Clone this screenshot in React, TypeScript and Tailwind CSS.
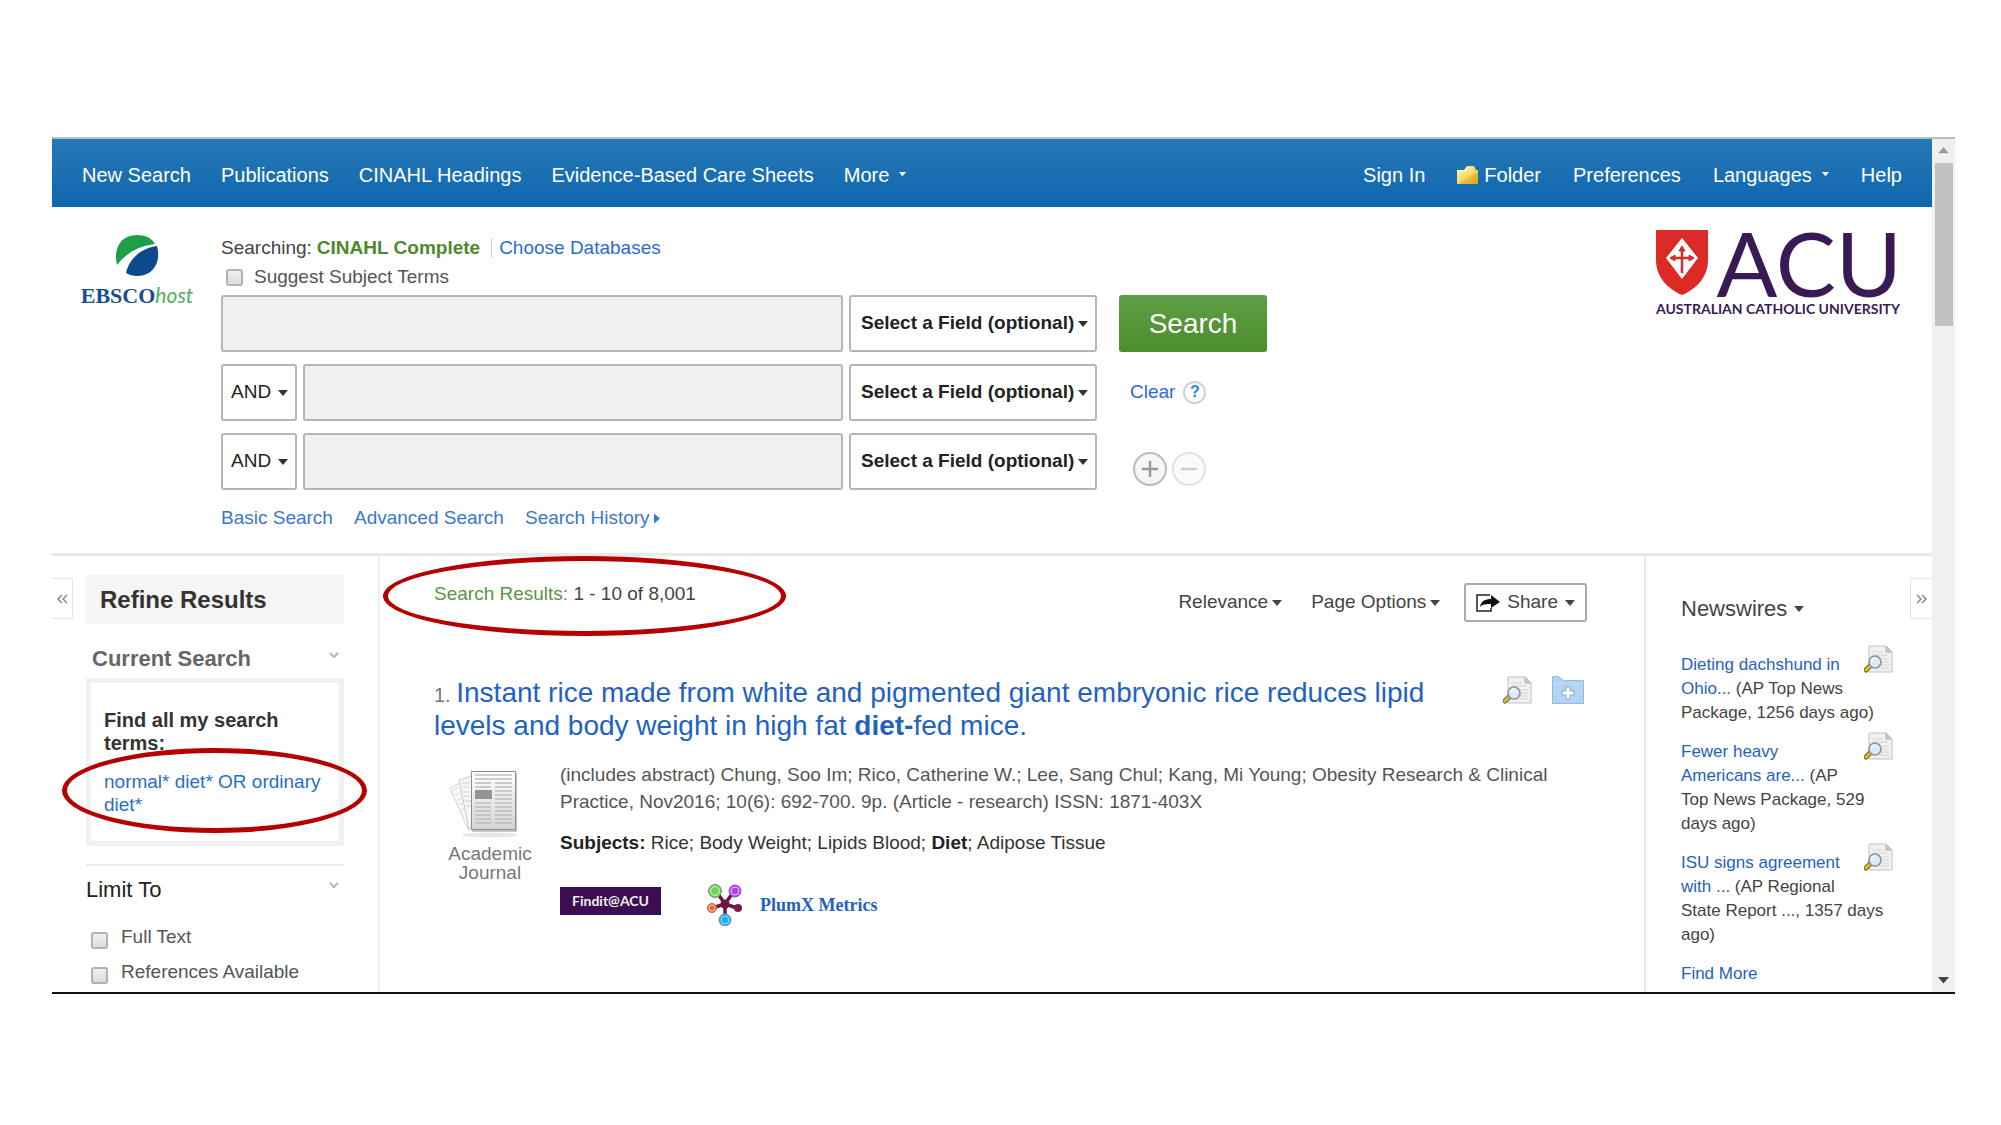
import { Fragment, type ReactNode } from "react";

const Caret = ({ className = "w-[10px]" }: { className?: string }) => (
  <svg viewBox="0 0 10 6" className={`inline-block shrink-0 ${className}`} aria-hidden="true">
    <path d="M0 0h10L5 6z" fill="currentColor" />
  </svg>
);

const FolderIcon = () => (
  <svg viewBox="0 0 22 20" className="h-5 w-[22px]" aria-hidden="true">
    <defs>
      <linearGradient id="folder" x1="0" y1="0" x2="1" y2="1">
        <stop offset="0" stopColor="#fdf6c4" />
        <stop offset="0.5" stopColor="#f6dc6a" />
        <stop offset="1" stopColor="#d9a41c" />
      </linearGradient>
    </defs>
    <path d="M0 5h7l3-4h7l2 4h2v14H0z" fill="url(#folder)" />
    <path d="M0 19L21 8v11z" fill="#d8a820" opacity="0.45" />
    <path d="M1 6h7l3-4" fill="none" stroke="#fffbe0" />
  </svg>
);

const PreviewIcon = () => (
  <svg viewBox="0 0 29 28" className="h-7 w-[29px]" aria-hidden="true">
    <path d="M5 1h17l6 6v20H5z" fill="#f1f1f1" stroke="#c2c2c2" />
    <path d="M22 1v6h6z" fill="#c9c9c9" stroke="#b5b5b5" />
    <path d="M8 7h11M8 10h16M17 14h8M17 17h8M17 20h8M13 23h12" stroke="#d4d4d4" />
    <path d="M2 25l4-4" stroke="#6f6320" strokeWidth="5" strokeLinecap="round" />
    <path d="M2 25l4-4" stroke="#d9bf3c" strokeWidth="3" strokeLinecap="round" />
    <circle cx="11" cy="17" r="6" fill="#dcebf8" stroke="#8c9298" strokeWidth="1.6" />
    <path d="M7.500 16a4 4 0 0 1 4-3" stroke="#fff" strokeWidth="1.600" fill="none" />
  </svg>
);

const AddFolderIcon = () => (
  <svg viewBox="0 0 32 28" className="h-7 w-8" aria-hidden="true">
    <path d="M.5 27.500V.5h6l5 4h20v23z" fill="#b3d3f3" stroke="#94bbe2" />
    <path d="M1 8h30" stroke="#c3dcf5" />
    <path d="M14 11h4v4h4v4h-4v4h-4v-4h-4v-4h4z" fill="#fff" stroke="#7ea9d6" />
  </svg>
);

const ShareIcon = () => (
  <svg viewBox="0 0 24 18" className="h-[18px] w-6" aria-hidden="true">
    <path d="M14 1H1v16h14v-3" fill="none" stroke="#222" strokeWidth="1.500" />
    <path d="M4 13c1-6 5-8 11-8V1l9 7-9 6v-4c-5 0-8 0-11 3z" fill="#111" />
  </svg>
);

const JournalIcon = () => (
  <svg viewBox="0 0 70 68" className="h-[68px] w-[70px]" aria-hidden="true">
    <defs>
      <linearGradient id="paper" x1="0" y1="0" x2="0" y2="1">
        <stop offset="0" stopColor="#fff" />
        <stop offset="1" stopColor="#d3d3d3" />
      </linearGradient>
    </defs>
    <ellipse cx="42" cy="65" rx="28" ry="2.500" fill="#e6e6e6" />
    <path d="M2 18l12-6 10 46-4 1z" fill="#f8f8f8" stroke="#d2d2d2" />
    <path d="M5 20l6-3M7 25l5-2M9 30l5-2M11 35l5-2M13 40l4-1" stroke="#d8d8d8" />
    <path d="M11 10l13-4v54l-3-1z" fill="#f6f6f6" stroke="#cacaca" />
    <path d="M14 13h8M14 17h8M15 22h7M16 26h6M17 31h6M18 36h5" stroke="#d2d2d2" />
    <path d="M24 3h45v59H24z" fill="#c4c4c4" />
    <path d="M23.500 1.500h44v58h-44z" fill="url(#paper)" stroke="#8c8c8c" />
    <path
      d="M27 5h37M27 9h37M27 13h16M47 13h17M27 17h16M47 17h17M47 21h17M47 25h17M47 29h17M27 33h16M47 33h17M27 37h16M47 37h17M27 41h16M47 41h17M27 45h16M47 45h17M27 49h16M47 49h17M27 53h16M47 53h17"
      stroke="#bdbdbd"
      strokeWidth="1.500"
    />
    <path d="M27 20h17v9H27z" fill="#949494" />
  </svg>
);

const PlumIcon = () => (
  <svg viewBox="0 0 36 42" className="h-[42px] w-9" aria-hidden="true">
    <path d="M18 20L9 7M18 20l9-13M18 20L5 24M18 20l12 4M18 20v15" stroke="#6b1846" strokeWidth="3.500" />
    <circle cx="18" cy="20" r="4.500" fill="#6b1846" />
    <circle cx="8" cy="7" r="6.500" fill="#63cf4a" stroke="#8a8a8a" />
    <circle cx="8" cy="7" r="4.500" fill="#6bdb4f" stroke="#d6f5cd" />
    <circle cx="28" cy="7" r="6" fill="#b73df0" stroke="#8a5a9a" />
    <circle cx="28" cy="7" r="4" fill="#b73df0" stroke="#ecc9fb" />
    <circle cx="5" cy="24" r="4.500" fill="#f0622a" stroke="#b06a50" />
    <circle cx="5" cy="24" r="3" fill="#f0622a" stroke="#fbd2c0" />
    <circle cx="31" cy="24" r="4" fill="#7c1c4c" />
    <circle cx="18" cy="36" r="6" fill="#1fb0ea" stroke="#7a8c9a" />
    <circle cx="18" cy="36" r="4" fill="#1fb0ea" stroke="#9adcf5" />
  </svg>
);

const EbscoLogo = () => (
  <div className="flex w-[114px] flex-col items-center pt-[27px]">
    <svg viewBox="0 0 44 43" className="h-[43px] w-11" aria-hidden="true">
      <path d="M2 31C-2 14 6 1 22 1c8 0 15 3 18 9C24 12 11 19 2 31z" fill="#1f9e48" />
      <path d="M42 12c4 14-2 30-20 30-4 0-8-1-11-3C14 25 26 14 42 12z" fill="#0c4a8e" />
    </svg>
    <div className="mt-1 flex items-baseline leading-7">
      <span className="font-['Liberation_Serif',serif] text-[22px] font-bold text-[#1a4f8b]">EBSCO</span>
      <span className="font-[Lato,sans-serif] text-[21px] text-[#52ae62] italic">host</span>
    </div>
  </div>
);

const AcuLogo = () => (
  <div className="flex w-[246px] flex-col pt-[22px] font-[Lato,sans-serif] text-[#3a1a55]">
    <div className="flex h-[66px] items-center justify-between">
      <svg viewBox="0 0 52 65" className="h-[65px] w-[52px]" aria-hidden="true">
        <path d="M0 0h52v30c0 16-10 28-26 35C10 58 0 46 0 30z" fill="#dc2b27" />
        <path d="M26 8l16 20-16 21L10 28z" fill="#fff" />
        <path d="M26 17v26M15 28h22" stroke="#dc2b27" strokeWidth="2.500" />
        <path
          d="M23 21l3-5 3 5zM19 25l-5 3 5 3zM33 25l5 3-5 3z"
          fill="#dc2b27"
          stroke="#dc2b27"
          strokeLinejoin="round"
        />
      </svg>
      <span className="text-[90px] leading-[60px]">ACU</span>
    </div>
    <span className="text-sm leading-7 font-bold whitespace-nowrap">AUSTRALIAN CATHOLIC UNIVERSITY</span>
  </div>
);

const FieldSelect = ({ label, value, bold }: { label: string; value: string; bold?: boolean }) => (
  <div className={`relative shrink-0 ${bold ? "w-[248px]" : "w-[76px]"}`}>
    <select
      aria-label={label}
      className={`h-[57px] w-full appearance-none rounded-[3px] border-2 border-[#b5b5b5] bg-white text-[#222] outline-none ${
        bold ? "pl-[10px] font-bold" : "pl-2"
      }`}
    >
      <option>{value}</option>
    </select>
    <span className="pointer-events-none absolute inset-y-0 right-[9px] flex items-center text-[#333]">
      <Caret />
    </span>
  </div>
);

const SearchInput = ({ label }: { label: string }) => (
  <input
    type="text"
    aria-label={label}
    className="h-[57px] min-w-0 flex-1 rounded-[3px] border-2 border-[#b5b5b5] bg-[#f1f1f1] px-3 outline-none"
  />
);

const Checkbox = ({ id }: { id: string }) => (
  <input
    id={id}
    type="checkbox"
    className="h-[17px] w-[17px] shrink-0 appearance-none rounded-[3px] border-2 border-[#b2b2b2] bg-linear-to-b from-[#efefef] to-[#dedede]"
  />
);

const Chevron = () => (
  <svg viewBox="0 0 10 7" className="h-[7px] w-[10px]" aria-hidden="true">
    <path d="M1 1l4 4 4-4" fill="none" stroke="#b5b5b5" strokeWidth="2" />
  </svg>
);

const Highlight = ({ className }: { className: string }) => (
  <span className={`pointer-events-none absolute rounded-[50%] border-[5px] border-[#b50000] ${className}`} />
);

const leftNav = ["New Search", "Publications", "CINAHL Headings", "Evidence-Based Care Sheets"];

const news: { link: string[]; source: string[] }[] = [
  { link: ["Dieting dachshund in", "Ohio..."], source: ["(AP Top News", "Package, 1256 days ago)"] },
  { link: ["Fewer heavy", "Americans are..."], source: ["(AP", "Top News Package, 529", "days ago)"] },
  { link: ["ISU signs agreement", "with ..."], source: ["(AP Regional", "State Report ..., 1357 days", "ago)"] },
];

const Lines = ({ items }: { items: string[] }) => (
  <>
    {items.map((item, i) => (
      <Fragment key={item}>
        {i > 0 && <br />}
        {item}
      </Fragment>
    ))}
  </>
);

const NavLink = ({ children }: { children: ReactNode }) => (
  <a href="#" className="flex items-center gap-[5px] whitespace-nowrap">
    {children}
  </a>
);

const TopNav = () => (
  <nav className="flex h-[68px] items-center justify-between bg-linear-to-b from-[#2678b6] to-[#0c67ae] px-[30px] pt-[3px] text-xl text-white">
    <div className="flex gap-[30px]">
      {leftNav.map((item) => (
        <NavLink key={item}>{item}</NavLink>
      ))}
      <button type="button" className="flex items-center gap-[10px]">
        More <Caret className="w-[7px]" />
      </button>
    </div>
    <div className="flex gap-8">
      <NavLink>Sign In</NavLink>
      <NavLink>
        <FolderIcon /> Folder
      </NavLink>
      <NavLink>Preferences</NavLink>
      <button type="button" className="flex items-center gap-[10px]">
        Languages <Caret className="w-[7px]" />
      </button>
      <NavLink>Help</NavLink>
    </div>
  </nav>
);

const SearchHeader = () => (
  <header className="flex h-[349px] items-start border-b-[3px] border-[#e9e9e9] pr-[30px] pl-7">
    <EbscoLogo />
    <form className="ml-[27px] w-[876px] pt-[27px] text-[#444]">
      <div className="flex items-center leading-7">
        <span>Searching:</span>
        <span className="ml-[5px] font-bold text-[#4a8a2c]">CINAHL Complete</span>
        <a href="#" className="ml-[11px] border-l border-[#ccc] pl-[7px] leading-5 text-[#2a6bd0]">
          Choose Databases
        </a>
      </div>
      <div className="mt-px mb-1 flex items-center gap-[11px] pl-[5px] leading-7">
        <Checkbox id="suggest" />
        <label htmlFor="suggest" className="text-[#555]">
          Suggest Subject Terms
        </label>
      </div>
      <div className="flex flex-col gap-3">
        <div className="flex gap-[6px]">
          <SearchInput label="Search term 1" />
          <FieldSelect label="Field 1" value="Select a Field (optional)" bold />
        </div>
        {[2, 3].map((n) => (
          <div key={n} className="flex gap-[6px]">
            <FieldSelect label={`Operator ${n}`} value="AND" />
            <SearchInput label={`Search term ${n}`} />
            <FieldSelect label={`Field ${n}`} value="Select a Field (optional)" bold />
          </div>
        ))}
      </div>
      <div className="mt-[14px] flex gap-[21px] leading-7 text-[#3a78cc]">
        <a href="#">Basic Search</a>
        <a href="#">Advanced Search</a>
        <a href="#" className="flex items-center gap-1">
          Search History
          <svg viewBox="0 0 6 10" className="h-[11px] w-[6px]" aria-hidden="true">
            <path d="M0 0l6 5-6 5z" fill="#2583cc" />
          </svg>
        </a>
      </div>
    </form>
    <div className="ml-[22px] flex flex-col items-start pt-[88px]">
      <button
        type="button"
        className="h-[57px] w-[148px] rounded-[3px] bg-linear-to-b from-[#5f9f46] to-[#4c8d2c] text-[28px] text-white"
      >
        Search
      </button>
      <div className="mt-[26px] flex items-center gap-2 pl-[11px] leading-7">
        <button type="button" className="text-[#2a6bd0]">
          Clear
        </button>
        <button
          type="button"
          aria-label="Help"
          className="flex h-[23px] w-[23px] items-center justify-center rounded-full border-2 border-[#d3d3d3] text-base font-bold text-[#2583f0]"
        >
          ?
        </button>
      </div>
      <div className="mt-[46px] flex gap-[5px] pl-[14px]">
        <button type="button" aria-label="Add row" className="rounded-full border-2 border-[#bbb] bg-[#f6f6f6]">
          <svg viewBox="0 0 30 30" className="h-[30px] w-[30px]">
            <path d="M15 7v16M7 15h16" stroke="#999" strokeWidth="2.500" />
          </svg>
        </button>
        <button type="button" aria-label="Remove row" className="rounded-full border-2 border-[#e2e2e2] bg-[#fbfbfb]">
          <svg viewBox="0 0 30 30" className="h-[30px] w-[30px]">
            <path d="M7 15h16" stroke="#ccc" strokeWidth="2.500" />
          </svg>
        </button>
      </div>
    </div>
    <div className="ml-auto">
      <AcuLogo />
    </div>
  </header>
);

const Sidebar = () => (
  <aside className="flex w-[328px] shrink-0 items-start border-r-2 border-[#ededed] pb-[3px]">
    <button
      type="button"
      aria-label="Collapse"
      className="mt-[22px] flex h-[41px] w-[21px] items-center justify-center border border-l-0 border-[#e6e6e6]"
    >
      <svg viewBox="0 0 12 10" className="h-[10px] w-3">
        <path d="M6 1L2 5l4 4M11 1L7 5l4 4" fill="none" stroke="#888" strokeWidth="1.500" />
      </svg>
    </button>
    <div className="ml-[13px] w-[258px] pt-[19px]">
      <h2 className="bg-[#f5f5f5] pl-[14px] text-2xl leading-[49px] font-bold text-[#333]">Refine Results</h2>
      <div className="mt-5 flex justify-between pr-[5px] pl-[6px]">
        <h3 className="text-[22px] leading-[30px] font-bold text-[#666]">Current Search</h3>
        <span className="pt-2">
          <Chevron />
        </span>
      </div>
      <div className="relative mt-1 h-[168px] border-[5px] border-[#f1f1f1] pt-[26px] pl-[13px] leading-[23px]">
        <p className="text-xl leading-[23px] font-bold text-[#333]">
          Find all my search
          <br />
          terms:
        </p>
        <a href="#" className="mt-[15px] block text-[#2a6fc4]">
          normal* diet* OR ordinary
          <br />
          diet*
        </a>
        <Highlight className="top-[65px] -left-[29px] h-[85px] w-[305px]" />
      </div>
      <div className="mt-[18px] flex justify-between border-t-2 border-[#ededed] pt-[10px] pr-[5px]">
        <h3 className="text-[22px] leading-[28px] text-[#222]">Limit To</h3>
        <span className="pt-[6px]">
          <Chevron />
        </span>
      </div>
      <div className="mt-[15px] pl-[5px] text-[#555]">
        <div className="flex items-end gap-[13px] leading-[35px]">
          <span className="flex h-7 items-center">
            <Checkbox id="fulltext" />
          </span>
          <label htmlFor="fulltext">Full Text</label>
        </div>
        <div className="flex items-end gap-[13px] leading-[35px]">
          <span className="flex h-7 items-center">
            <Checkbox id="references" />
          </span>
          <label htmlFor="references">References Available</label>
        </div>
      </div>
    </div>
  </aside>
);

const Results = () => (
  <main className="min-w-0 flex-1 pr-[57px] pl-[54px] text-[#555]">
    <div className="flex items-start justify-between">
      <div className="relative pt-6 leading-7">
        <span className="text-[#5b9440]">Search Results:</span> <span className="text-[#444]">1 - 10 of 8,001</span>
        <Highlight className="top-0 -left-[51px] h-20 w-[403px]" />
      </div>
      <div className="flex items-center gap-[29px] pt-[27px] text-[#444]">
        <button type="button" className="flex items-center gap-1">
          Relevance <Caret />
        </button>
        <button type="button" className="flex items-center gap-1">
          Page Options <Caret />
        </button>
        <button
          type="button"
          className="-ml-[5px] flex h-[39px] items-center gap-[7px] rounded-[3px] border-2 border-[#aaa] px-[10px]"
        >
          <ShareIcon /> Share <Caret />
        </button>
      </div>
    </div>
    <article className="mt-[54px]">
      <div className="flex items-start justify-between">
        <h2 className="text-[28px] leading-[33px] text-[#1f62c0]">
          <span className="text-xl leading-none text-[#777]">1. </span>
          <a href="#">
            Instant rice made from white and pigmented giant embryonic rice reduces lipid
            <br />
            levels and body weight in high fat <b>diet-</b>fed mice.
          </a>
        </h2>
        <div className="flex shrink-0 gap-5 pr-[3px]">
          <button type="button" aria-label="Preview">
            <PreviewIcon />
          </button>
          <button type="button" aria-label="Add to folder">
            <AddFolderIcon />
          </button>
        </div>
      </div>
      <div className="mt-[13px] flex">
        <div className="flex w-[126px] shrink-0 flex-col items-start pt-[15px] pl-[14px]">
          <JournalIcon />
          <p className="mt-[6px] w-[84px] text-center leading-[19px] text-[#777]">
            Academic
            <br />
            Journal
          </p>
        </div>
        <div className="leading-[27px]">
          <p className="pt-[6px]">
            (includes abstract) Chung, Soo Im; Rico, Catherine W.; Lee, Sang Chul; Kang, Mi Young; Obesity Research &
            Clinical
            <br />
            Practice, Nov2016; 10(6): 692-700. 9p. (Article - research) ISSN: 1871-403X
          </p>
          <p className="mt-[14px] text-[#333]">
            <b className="text-[#222]">Subjects:</b> Rice; Body Weight; Lipids Blood; <b className="text-[#222]">Diet</b>;
            Adipose Tissue
          </p>
          <div className="mt-[31px] flex items-start">
            <a
              href="#"
              className="flex h-7 w-[101px] items-center justify-center bg-[#3b0d52] font-[Lato,sans-serif] text-sm font-bold text-[#eee]"
            >
              Findit@ACU
            </a>
            <a href="#" className="-mt-[3px] ml-[46px] flex items-center gap-[17px]">
              <PlumIcon />
              <span className="font-['Liberation_Serif',serif] text-lg font-bold text-[#1f62c0]">PlumX Metrics</span>
            </a>
          </div>
        </div>
      </div>
    </article>
  </main>
);

const Newswires = () => (
  <aside className="flex w-[288px] shrink-0 items-start border-l-2 border-[#e9e9e9] pl-[35px]">
    <div className="flex-1 pt-[39px] text-[17px] leading-6 text-[#444]">
      <button type="button" className="flex items-center gap-[7px] text-[22px] leading-7">
        Newswires <Caret />
      </button>
      <ul className="mt-[30px] flex flex-col gap-[15px]">
        {news.map((item) => (
          <li key={item.link[0]} className="relative whitespace-nowrap">
            <a href="#" className="text-[#1f62c0]">
              <Lines items={item.link} />
            </a>{" "}
            <Lines items={item.source} />
            <button type="button" aria-label="Preview" className="absolute -top-2 left-[183px]">
              <PreviewIcon />
            </button>
          </li>
        ))}
      </ul>
      <a href="#" className="mt-[15px] block text-[#1f62c0]">
        Find More
      </a>
    </div>
    <button
      type="button"
      aria-label="Expand"
      className="mt-[22px] flex h-[41px] w-[22px] items-center justify-center border border-r-0 border-[#e6e6e6]"
    >
      <svg viewBox="0 0 12 10" className="h-[10px] w-3">
        <path d="M1 1l4 4-4 4M6 1l4 4-4 4" fill="none" stroke="#888" strokeWidth="1.500" />
      </svg>
    </button>
  </aside>
);

const Scrollbar = () => (
  <div className="flex w-[23px] shrink-0 flex-col items-center bg-[#f0f0f0] py-2">
    <Caret className="w-[11px] rotate-180 text-[#999]" />
    <div className="mt-[9px] h-[163px] w-[18px] bg-[#c1c1c1]" />
    <Caret className="mt-auto w-[11px] text-[#444]" />
  </div>
);

const App = () => (
  <div className="bg-white pt-[137px] pr-[46px] pb-[131px] pl-[52px] font-['Liberation_Sans',Arial,sans-serif] text-[19px]">
    <div className="flex border-t-2 border-b-2 border-t-[#b5bfc8] border-b-[#111]">
      <div className="min-w-0 flex-1">
        <TopNav />
        <SearchHeader />
        <div className="flex">
          <Sidebar />
          <Results />
          <Newswires />
        </div>
      </div>
      <Scrollbar />
    </div>
  </div>
);

export default App;
